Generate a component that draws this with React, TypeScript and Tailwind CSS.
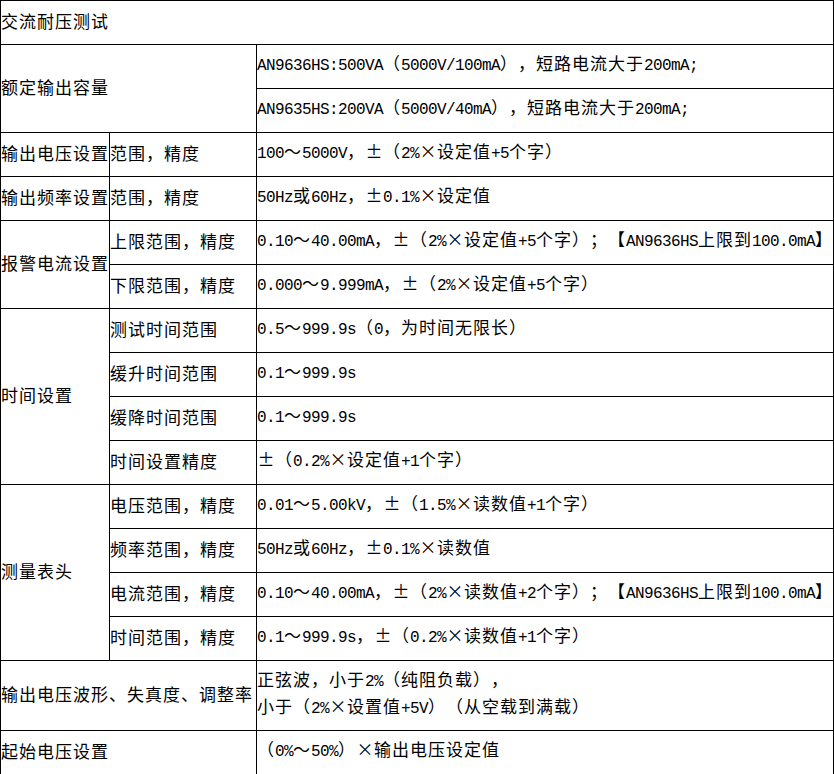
import React from "react";

// Latin runs are drawn at a 9px pitch, CJK at 18px, like the Song-style source
function Txt({ s }: { s: string }) {
  const parts: { t: string; k: "a" | "c" | "w" }[] = [];
  for (const ch of s) {
    const k = ch.charCodeAt(0) < 128 ? "a" : ch === "±" || ch === "×" ? "w" : "c";
    const last = parts[parts.length - 1];
    if (last && last.k === k && k !== "w") last.t += ch;
    else parts.push({ t: ch, k });
  }
  return (
    <>
      {parts.map((p, i) =>
        p.k === "a" ? (
          <span key={i} className="font-['Liberation_Mono',monospace] text-[16px] tracking-[-0.6px]">
            {p.t}
          </span>
        ) : p.k === "w" ? (
          <span key={i} className="inline-block w-[18px] text-center tracking-[0px]">
            {p.t}
          </span>
        ) : (
          <span key={i}>{p.t}</span>
        )
      )}
    </>
  );
}

type CellProps = { s: string; className?: string };

function Cell({ s, className = "" }: CellProps) {
  return (
    <div className={`bg-white flex items-center pb-[4px] whitespace-nowrap overflow-hidden ${className}`}>
      <span>
        <Txt s={s} />
      </span>
    </div>
  );
}

export default function App() {
  return (
    <div className="w-[834px] h-[774px] bg-white overflow-hidden">
      <div className="bg-black pt-px px-px grid grid-cols-[108px_146px_576px] grid-rows-[repeat(15,43px)_69px_43px] gap-px text-black font-['Noto_Sans_CJK_SC',sans-serif] text-[17px] tracking-[1px] leading-[24px] [text-spacing-trim:space-all]">
        <Cell s="交流耐压测试" className="col-span-3" />

        <Cell s="额定输出容量" className="col-span-2 row-span-2" />
        <Cell s="AN9636HS:500VA（5000V/100mA），短路电流大于200mA;" />
        <Cell s="AN9635HS:200VA（5000V/40mA），短路电流大于200mA;" />

        <Cell s="输出电压设置" />
        <Cell s="范围，精度" />
        <Cell s="100～5000V，±（2%×设定值+5个字）" />

        <Cell s="输出频率设置" />
        <Cell s="范围，精度" />
        <Cell s="50Hz或60Hz，±0.1%×设定值" />

        <Cell s="报警电流设置" className="row-span-2" />
        <Cell s="上限范围，精度" />
        <Cell s="0.10～40.00mA，±（2%×设定值+5个字）；【AN9636HS上限到100.0mA】" />
        <Cell s="下限范围，精度" />
        <Cell s="0.000～9.999mA，±（2%×设定值+5个字）" />

        <Cell s="时间设置" className="row-span-4" />
        <Cell s="测试时间范围" />
        <Cell s="0.5～999.9s（0，为时间无限长）" />
        <Cell s="缓升时间范围" />
        <Cell s="0.1～999.9s" />
        <Cell s="缓降时间范围" />
        <Cell s="0.1～999.9s" />
        <Cell s="时间设置精度" />
        <Cell s="±（0.2%×设定值+1个字）" />

        <Cell s="测量表头" className="row-span-4" />
        <Cell s="电压范围，精度" />
        <Cell s="0.01～5.00kV，±（1.5%×读数值+1个字）" />
        <Cell s="频率范围，精度" />
        <Cell s="50Hz或60Hz，±0.1%×读数值" />
        <Cell s="电流范围，精度" />
        <Cell s="0.10～40.00mA，±（2%×读数值+2个字）；【AN9636HS上限到100.0mA】" />
        <Cell s="时间范围，精度" />
        <Cell s="0.1～999.9s，±（0.2%×读数值+1个字）" />

        <Cell s="输出电压波形、失真度、调整率" className="col-span-2" />
        <div className="bg-white flex flex-col justify-center pb-[4px] whitespace-nowrap">
          <span>
            <Txt s="正弦波，小于2%（纯阻负载），" />
          </span>
          <span>
            <Txt s="小于（2%×设置值+5V）（从空载到满载）" />
          </span>
        </div>

        <Cell s="起始电压设置" className="col-span-2" />
        <Cell s="（0%～50%）×输出电压设定值" />
      </div>
    </div>
  );
}
